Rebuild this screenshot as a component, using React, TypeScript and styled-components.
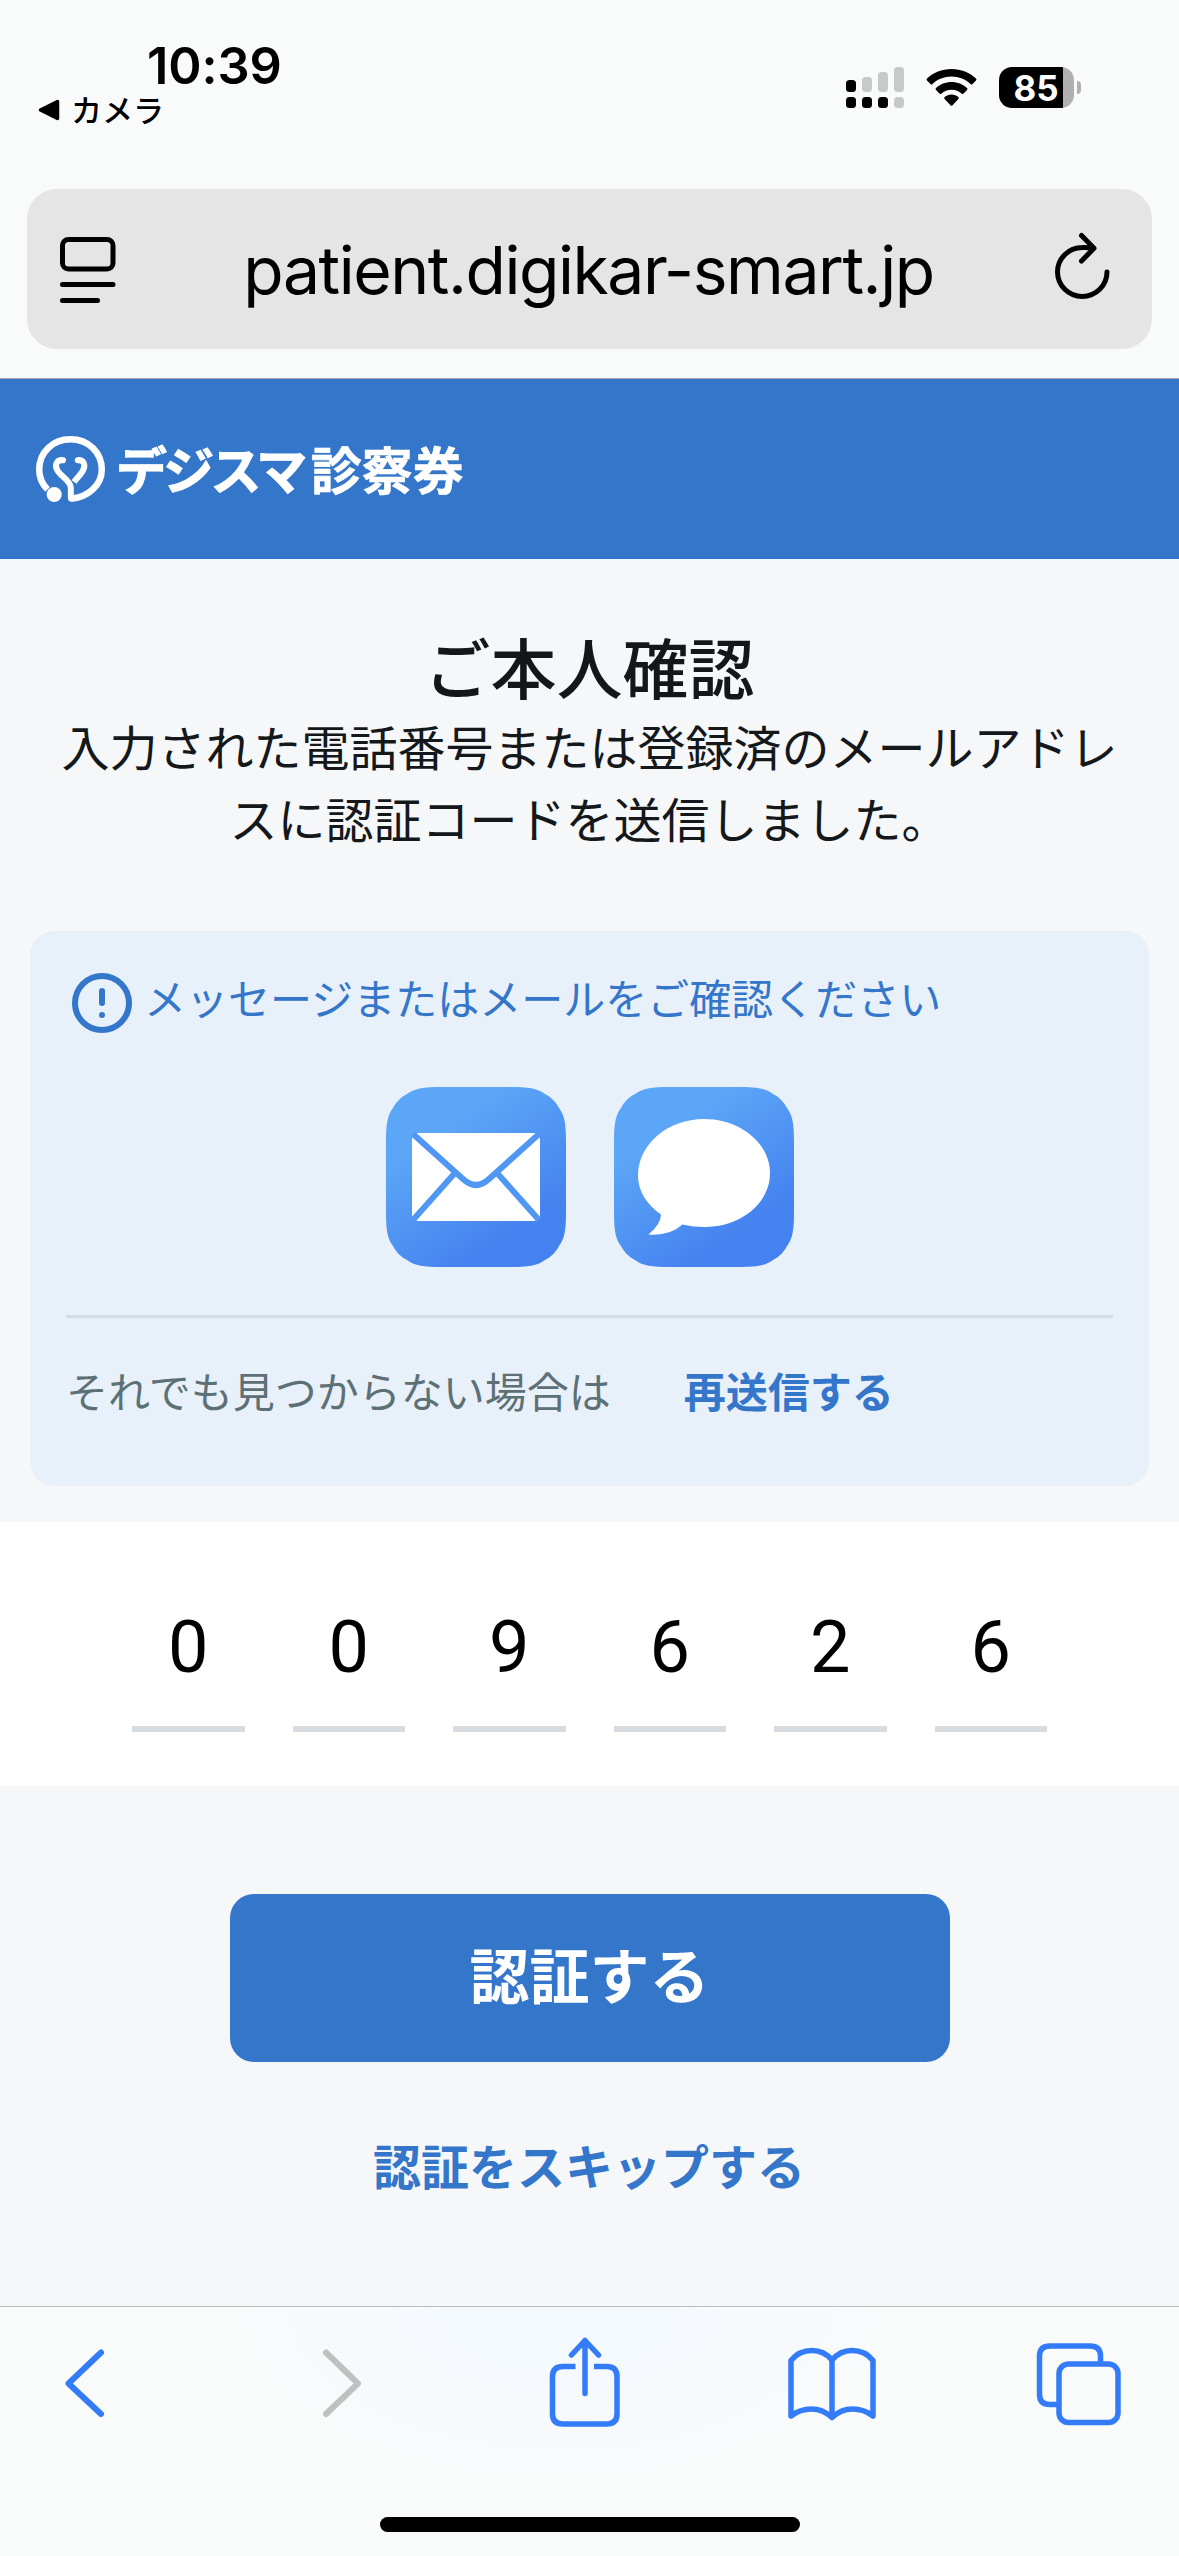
import React from "react";
import styled, { createGlobalStyle } from "styled-components";

const JP = `"Noto Sans CJK JP", sans-serif`;
const BLUE = "#3476ca";
const IOS = "#347bf7";

const Global = createGlobalStyle`
  * { box-sizing: border-box; }
  body { margin: 0; background: #f6f7f9; }
  svg { overflow: visible; flex: none; }
`;

const Screen = styled.div`
  width: 1179px;
  height: 2556px;
  display: flex;
  flex-direction: column;
  background: #f6f7f9;
  font-family: ${JP};
  overflow: hidden;
`;

const Chrome = styled.header`
  height: 379px;
  flex: none;
  background: #f9fbfa;
  border-bottom: 1px solid #a6a9ad;
`;

const StatusBar = styled.div`
  height: 189px;
  display: flex;
  justify-content: space-between;
  padding: 0 98px 0 37px;
`;

const StatusLeft = styled.div`
  padding-top: 40px;
`;

const Clock = styled.div`
  padding-left: 110px;
  height: 50px;
  font: 600 50.5px/51px Inter, sans-serif;
  letter-spacing: -0.1px;
`;

const BackToApp = styled.div`
  display: flex;
  align-items: center;
  gap: 12px;
  height: 40px;
  font-size: 31px;
  line-height: 36px;
  font-weight: 500;
`;

const AppName = styled.span`
  padding-bottom: 3px;
`;

const StatusRight = styled.div`
  display: flex;
  gap: 22px;
  padding-top: 67px;
`;

const Battery = styled.div`
  display: flex;
  align-items: center;
  gap: 3px;
  height: 41px;
`;

const BatteryBody = styled.div`
  width: 75px;
  height: 41px;
  padding-right: 11px;
  border-radius: 13px;
  background: linear-gradient(90deg, #000 64px, #b0b0b0 64px);
  color: #fff;
  font: 700 35px/42px Inter, sans-serif;
  text-align: center;
  padding-left: 10px;
`;

const BatteryTip = styled.div`
  width: 4px;
  height: 13px;
  border-radius: 0 5px 5px 0;
  background: #b0b0b0;
`;

const AddressBar = styled.div`
  margin: 0 27px;
  height: 160px;
  padding: 0 42px 0 33px;
  display: flex;
  align-items: center;
  justify-content: space-between;
  border-radius: 30px;
  background: #e5e5e5;
`;

const Url = styled.span`
  margin-left: 7px;
  padding-top: 1px;
  font: 400 66px/80px Inter, sans-serif;
  letter-spacing: -1.45px;
  white-space: nowrap;
`;

const Brand = styled.div`
  height: 180px;
  flex: none;
  display: flex;
  align-items: center;
  gap: 10px;
  padding: 0 36px;
  background: ${BLUE};
  color: #fff;
`;

const BrandName = styled.div`
  display: flex;
  gap: 7px;
  font-weight: 700;
  font-size: 51px;
  line-height: 58px;
  padding-bottom: 2px;
  white-space: nowrap;
`;

const Kana = styled.span`
  letter-spacing: -3.7px;
  -webkit-text-stroke: 1px #fff;
`;

const Kanji = styled.span`
  letter-spacing: 0;
  -webkit-text-stroke: 0.6px #fff;
`;

const Intro = styled.section`
  height: 372px;
  flex: none;
  padding-top: 65px;
  text-align: center;
`;

const Title = styled.h1`
  margin: 0 0 3px;
  color: #11171a;
  font-size: 66px;
  line-height: 82px;
  font-weight: 500;
`;

const Lead = styled.p`
  margin: 0;
  padding: 0 60px;
  color: #14181a;
  font-size: 48px;
  line-height: 72px;
  font-weight: 400;
`;

const Card = styled.section`
  height: 555px;
  flex: none;
  margin: 0 30px;
  padding: 0 36px;
  border-radius: 24px;
  background: #e8f0fa;
`;

const Notice = styled.div`
  display: flex;
  align-items: center;
  gap: 6px;
  height: 156px;
  padding: 36px 0 48px;
  color: ${BLUE};
  font-size: 42px;
  line-height: 60px;
`;

const NoticeText = styled.span`
  padding-bottom: 12px;
`;

const AppIcons = styled.div`
  display: flex;
  justify-content: center;
  gap: 48px;
  padding-bottom: 48px;
  border-bottom: 3px solid #d6dce5;
`;

const Resend = styled.div`
  display: flex;
  gap: 73px;
  padding-top: 40px;
  font-size: 42px;
  line-height: 64px;
  color: #5d7075;
`;

const ResendLink = styled.a`
  color: ${BLUE};
  font-weight: 700;
`;

const CodePanel = styled.section`
  height: 264px;
  flex: none;
  margin-top: 36px;
  display: flex;
  justify-content: center;
  gap: 48px;
  padding-top: 54px;
  background: #fff;
`;

const Digit = styled.div`
  width: 112.5px;
  height: 156px;
  border-bottom: 6px solid #d7dce0;
  font: 400 72px/143px Roboto, sans-serif;
  text-align: center;
  color: #000;
`;

const Actions = styled.section`
  flex: 1;
  display: flex;
  flex-direction: column;
  align-items: center;
  gap: 66px;
  padding-top: 108px;
`;

const Submit = styled.button`
  width: 720px;
  height: 168px;
  padding: 0 0 10px;
  border: 0;
  border-radius: 24px;
  background: ${BLUE};
  color: #fff;
  font: 700 60px/90px ${JP};
`;

const Skip = styled.a`
  padding-right: 1px;
  color: ${BLUE};
  font-size: 48px;
  line-height: 72px;
  font-weight: 700;
`;

const Toolbar = styled.footer`
  height: 250px;
  flex: none;
  display: flex;
  flex-direction: column;
  align-items: center;
  justify-content: space-between;
  padding-bottom: 24px;
  border-top: 1px solid #bcbec0;
  background: radial-gradient(ellipse 360px 190px at 560px 0, #f4f9fe 25%, #f9fbfa 100%);
`;

const Tools = styled.nav`
  width: 100%;
  display: flex;
  align-items: center;
  justify-content: space-between;
  padding: 24px 56px 0 60px;
`;

const HomeIndicator = styled.div`
  width: 420px;
  height: 15px;
  border-radius: 8px;
  background: #000;
`;

const stroke = {
  fill: "none",
  strokeLinecap: "round" as const,
  strokeLinejoin: "round" as const,
};

const Signal = () => (
  <svg width="58" height="41" viewBox="0 0 58 41">
    {[13, 10, 5, 0].map((y, i) => (
      <g key={i}>
        <rect x={i * 16} y={y} width="10" height={25 - y} rx="3.5" fill={i < 1 ? "#000" : "#c8c9c9"} />
        <rect x={i * 16} y="30" width="10" height="11" rx="3.5" fill={i < 3 ? "#000" : "#c8c9c9"} />
      </g>
    ))}
  </svg>
);

const Wifi = () => (
  <svg width="51" height="41" viewBox="0 0 51 41">
    <path d="M25.5 2C35 2 44 5.700 50 11.500Q51 12.500 50 13.500L46.500 17Q45.500 18 44.500 17C39.500 12.300 33 9.500 25.500 9.500S11.500 12.300 6.500 17Q5.500 18 4.500 17L1 13.500Q0 12.500 1 11.500C7 5.700 16 2 25.500 2Z" />
    <path d="M25.500 15C31.500 15 37 17.200 41 21Q42 22 41 23L37.500 26.500Q36.500 27.500 35.500 26.500C33 24.200 29.500 22.700 25.500 22.700S18 24.200 15.500 26.500Q14.500 27.500 13.500 26.500L10 23Q9 22 10 21C14 17.200 19.500 15 25.500 15Z" />
    <path d="M25.500 27.500C28 27.500 30.500 28.500 32.400 30Q33.300 31 32.400 32L26.500 38.200Q25.500 39.200 24.500 38.200L18.600 32Q17.700 31 18.600 30C20.500 28.500 23 27.500 25.500 27.500Z" />
  </svg>
);

const BackTriangle = () => (
  <svg width="22" height="22" viewBox="0 0 22 22">
    <path d="M20.500 2.500V19.500L3.500 11Z" stroke="#000" strokeWidth="3.500" strokeLinejoin="round" />
  </svg>
);

const PageMenuIcon = () => (
  <svg width="56" height="68" viewBox="0 0 56 68" stroke="#000" strokeWidth="5" {...stroke}>
    <rect x="2.500" y="4.500" width="50.500" height="29.500" rx="6" />
    <path d="M2.500 49.500H53M2.500 65.500H37.500" />
  </svg>
);

const ReloadIcon = () => (
  <svg width="56" height="70" viewBox="0 0 56 70" stroke="#000" strokeWidth="5" {...stroke}>
    <path d="M53 38A24.750 24.500 0 1 1 28.200 13.500Q34 13.300 39 14.300" />
    <path d="M27.500 1.500L40 14.300L27.500 27" />
  </svg>
);

const BrandMark = () => (
  <svg width="70" height="68" viewBox="0 0 70 68" fill="none" stroke="#fff" strokeWidth="6.500">
    <path d="M11.500 54.500C6 49 3.200 42.500 3.200 34.500C3.200 17 17 4.200 34.500 4.200S65.800 17 65.800 34.500C65.800 50 52 62.500 35 63.800" />
    <path d="M27 25.200C21 24.500 18 29.500 21.500 35.500C25 41.500 33.500 45 34.700 52C35.200 56 34.500 60 35 63.500" strokeWidth="6" strokeLinecap="round" strokeLinejoin="round" />
    <path d="M41.700 25.200C47.700 24.500 50 30 47 35.500C44.500 40 41 43 38 47" strokeWidth="6" />
    <circle cx="41.800" cy="25.200" r="3" fill="#fff" stroke="none" />
    <circle cx="18.200" cy="59.500" r="7.600" fill="#fff" stroke="none" />
  </svg>
);

const AlertIcon = () => (
  <svg width="72" height="72" viewBox="0 0 72 72" stroke={BLUE} strokeWidth="6" {...stroke}>
    <circle cx="36" cy="36" r="27" />
    <path d="M36 24V36M36 48V48.100" />
  </svg>
);

const Gradient = ({ id }: { id: string }) => (
  <linearGradient id={id} x1="0.250" y1="0.150" x2="0.750" y2="0.900">
    <stop offset="0.100" stopColor="#5ca6f7" />
    <stop offset="0.900" stopColor="#4482ef" />
  </linearGradient>
);

const TILE = "M56 0H124C142 0 151 1 159 7C165 10 170 15 173 21C179 29 180 38 180 56V124C180 142 179 151 173 159C170 165 165 170 159 173C151 179 142 180 124 180H56C38 180 29 179 21 173C15 170 10 165 7 159C1 151 0 142 0 124V56C0 38 1 29 7 21C10 15 15 10 21 7C29 1 38 0 56 0Z";

const MailIcon = () => (
  <svg width="180" height="180" viewBox="0 0 180 180">
    <defs><Gradient id="mail" /></defs>
    <path d={TILE} fill="url(#mail)" />
    <rect x="26" y="46" width="128" height="88" rx="6" fill="#fff" />
    <g fill="none" stroke="#5096f3" strokeWidth="6">
      <path d="M27 47L77 92Q90 104 103 92L153 47" />
      <path d="M27 133L68 87M153 133L112 87" />
    </g>
  </svg>
);

const MessageIcon = () => (
  <svg width="180" height="180" viewBox="0 0 180 180">
    <defs><Gradient id="message" /></defs>
    <path d={TILE} fill="url(#message)" />
    <path d="M90 32C126 32 156 56 156 86S127 140 91 140Q79 140 68.500 137.500Q56 149 34.500 147.500Q47 137 47 127.500C33 118 24 104 24 89C24 57 54 32 90 32Z" fill="#fff" />
  </svg>
);

const BackIcon = () => (
  <svg width="80" height="90" viewBox="0 5 80 90" stroke={IOS} strokeWidth="6" {...stroke}>
    <path d="M41 21.500L8.500 52.500L41 83" />
  </svg>
);

const ForwardIcon = () => (
  <svg width="99" height="90" viewBox="0 5 99 90" stroke="#bfc1c1" strokeWidth="6" {...stroke}>
    <path d="M33 21.500L65 52.500L33 83" />
  </svg>
);

const ShareIcon = () => (
  <svg width="88" height="100" viewBox="0 2 88 100" stroke={IOS} strokeWidth="5.500" {...stroke}>
    <path d="M30.500 37.500H18Q7.500 37.500 7.500 47.500V85Q7.500 95 18 95H61.500Q72 95 72 85V47.500Q72 37.500 61.500 37.500H49" strokeLinecap="butt" />
    <path d="M40 64.500V11.500M26.500 26L40 11.500L53.500 26" />
  </svg>
);

const BookIcon = () => (
  <svg width="92" height="90" viewBox="0 0 92 90" stroke={IOS} strokeWidth="5.500" {...stroke}>
    <path d="M46 24Q38 14.500 26 14.500Q13 14.500 5 24.500V80Q14 73 25.500 73Q37 73 46 81.500Q55 73 66.500 73Q78 73 87 80V24.500Q79 14.500 66 14.500Q54 14.500 46 24V81" />
  </svg>
);

const TabsIcon = () => (
  <svg width="92" height="90" viewBox="0 0 92 90" stroke={IOS} strokeWidth="5.500" {...stroke}>
    <path d="M28 68.500H19Q8.500 68.500 8.500 58.500V20Q8.500 10 19 10H59Q69.500 10 69.500 20V28" strokeLinecap="butt" />
    <rect x="28" y="28" width="59" height="58.500" rx="9.500" />
  </svg>
);

export default function App() {
  return (
    <Screen>
      <Global />
      <Chrome>
        <StatusBar>
          <StatusLeft>
            <Clock>10:39</Clock>
            <BackToApp><BackTriangle /><AppName>カメラ</AppName></BackToApp>
          </StatusLeft>
          <StatusRight>
            <Signal />
            <Wifi />
            <Battery><BatteryBody>85</BatteryBody><BatteryTip /></Battery>
          </StatusRight>
        </StatusBar>
        <AddressBar>
          <PageMenuIcon />
          <Url>patient.digikar-smart.jp</Url>
          <ReloadIcon />
        </AddressBar>
      </Chrome>
      <Brand>
        <BrandMark />
        <BrandName><Kana>デジスマ</Kana><Kanji>診察券</Kanji></BrandName>
      </Brand>
      <Intro>
        <Title>ご本人確認</Title>
        <Lead>入力された電話番号または登録済のメールアドレスに認証コードを送信しました。</Lead>
      </Intro>
      <Card>
        <Notice><AlertIcon /><NoticeText>メッセージまたはメールをご確認ください</NoticeText></Notice>
        <AppIcons><MailIcon /><MessageIcon /></AppIcons>
        <Resend><span>それでも見つからない場合は</span><ResendLink>再送信する</ResendLink></Resend>
      </Card>
      <CodePanel>
        {["0", "0", "9", "6", "2", "6"].map((d, i) => <Digit key={i}>{d}</Digit>)}
      </CodePanel>
      <Actions>
        <Submit>認証する</Submit>
        <Skip>認証をスキップする</Skip>
      </Actions>
      <Toolbar>
        <Tools>
          <BackIcon />
          <ForwardIcon />
          <ShareIcon />
          <BookIcon />
          <TabsIcon />
        </Tools>
        <HomeIndicator />
      </Toolbar>
    </Screen>
  );
}
